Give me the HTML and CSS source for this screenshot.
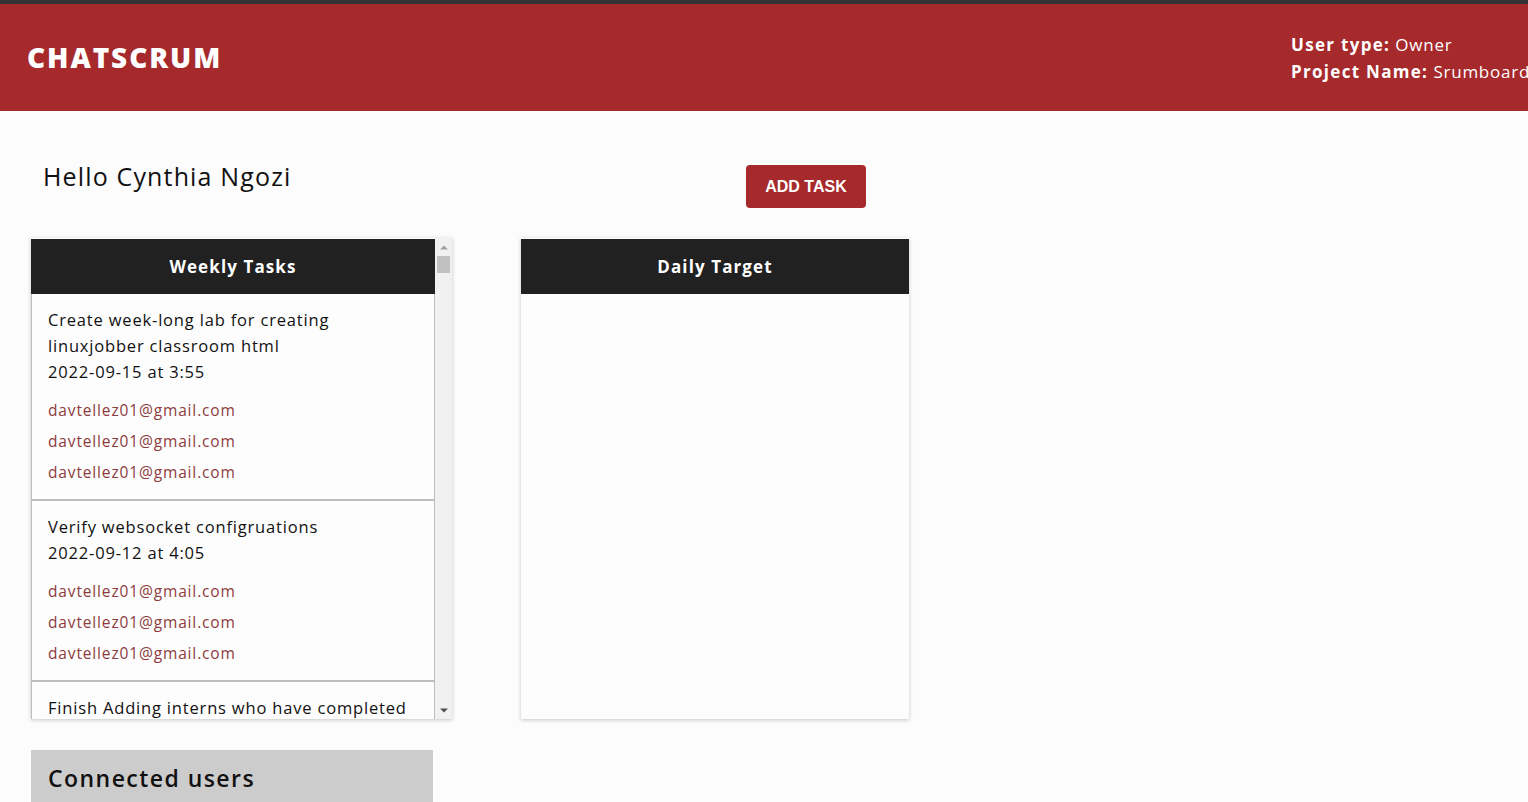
FILE: index.html
```html
<!DOCTYPE html>
<html lang="en">
<head>
<meta charset="utf-8">
<title>Chatscrum</title>
<link rel="stylesheet" href="styles.css">
</head>
<body>
<div class="topbar"></div>
<header class="header">
  <div class="brand">CHATSCRUM</div>
  <div class="info">
    <div><b>User type:</b> Owner</div>
    <div><b>Project Name:</b> Srumboard</div>
  </div>
</header>
<main class="main">
  <div class="greet-row">
    <h1 class="hello">Hello Cynthia Ngozi</h1>
    <button class="add-btn">ADD TASK</button>
  </div>
  <div class="boards">
    <section class="board weekly">
      <div class="board-scroll">
        <div class="board-head">Weekly Tasks</div>
        <div class="task">
          <div class="title">Create week-long lab for creating linuxjobber classroom html</div>
          <div class="title">2022-09-15 at 3:55</div>
          <div class="emails">
            <div class="email">davtellez01@gmail.com</div>
            <div class="email">davtellez01@gmail.com</div>
            <div class="email">davtellez01@gmail.com</div>
          </div>
        </div>
        <div class="task">
          <div class="title">Verify websocket configruations</div>
          <div class="title">2022-09-12 at 4:05</div>
          <div class="emails">
            <div class="email">davtellez01@gmail.com</div>
            <div class="email">davtellez01@gmail.com</div>
            <div class="email">davtellez01@gmail.com</div>
          </div>
        </div>
        <div class="task">
          <div class="title">Finish Adding interns who have completed</div>
        </div>
      </div>
      <div class="scrollbar" aria-hidden="true">
        <div class="sb-btn">
          <svg width="8" height="5" viewBox="0 0 8 5"><polygon points="0,4.5 8,4.5 4,0.5" fill="#a3a3a3"/></svg>
        </div>
        <div class="sb-track"><div class="sb-thumb"></div></div>
        <div class="sb-btn">
          <svg width="8" height="5" viewBox="0 0 8 5"><polygon points="0,0.5 8,0.5 4,4.5" fill="#505050"/></svg>
        </div>
      </div>
    </section>
    <section class="board daily">
      <div class="board-head">Daily Target</div>
    </section>
  </div>
  <section class="connected">
    <h2 class="connected-title">Connected users</h2>
  </section>
</main>
</body>
</html>
```
FILE: styles.css
```css
html, body {
  margin: 0;
  padding: 0;
  height: 100%;
  overflow: hidden;
}
body {
  background: #fcfcfc;
  font-family: "Open Sans", "Noto Sans", sans-serif;
  color: #111;
}
.topbar {
  height: 4px;
  background: #333333;
}
.header {
  height: 107px;
  background: #a6292b;
  display: flex;
  align-items: center;
  overflow: hidden;
  color: #fff;
}
.brand {
  flex: 0 0 1291px;
  box-sizing: border-box;
  padding-left: 27px;
  font-size: 28px;
  font-weight: 800;
  letter-spacing: 1.9px;
  margin-top: -2px;
}
.info {
  flex: 0 0 auto;
  white-space: nowrap;
  font-size: 17px;
  line-height: 27px;
  letter-spacing: 0.75px;
}
.info b {
  font-weight: 700;
  letter-spacing: 1.3px;
}
.main {
  padding: 0 31px;
}
.greet-row {
  display: flex;
  align-items: flex-start;
  height: 127px;
}
.hello {
  margin: 47px 0 0 12px;
  font-size: 25px;
  font-weight: 400;
  line-height: 36px;
  letter-spacing: 1.15px;
  width: 703px;
}
.add-btn {
  margin-top: 54px;
  width: 120px;
  height: 43px;
  background: #a6292b;
  color: #fff;
  border: none;
  border-radius: 4px;
  font-family: "Liberation Sans", Arial, sans-serif;
  font-size: 16px;
  font-weight: 700;
  padding: 0;
}
.boards {
  display: flex;
  align-items: flex-start;
}
.board {
  height: 481px;
  box-sizing: border-box;
  box-shadow: 0 1px 4px rgba(0, 0, 0, 0.22);
  background: #fdfdfd;
}
.weekly {
  width: 421px;
  display: flex;
}
.board-scroll {
  flex: 1 1 auto;
  min-width: 0;
  overflow: hidden;
}
.scrollbar {
  flex: 0 0 17px;
  display: flex;
  flex-direction: column;
  background: #f1f1f1;
  padding-top: 1px;
}
.sb-btn {
  height: 17px;
  display: flex;
  align-items: center;
  justify-content: center;
}
.sb-track {
  flex: 1 1 auto;
  padding: 0 2px;
}
.sb-thumb {
  height: 17px;
  background: #c1c1c1;
}
.daily {
  width: 388px;
  margin-left: 69px;
}
.board-head {
  height: 55px;
  margin-top: 1px;
  background: #212121;
  color: #fff;
  font-size: 17px;
  font-weight: 700;
  letter-spacing: 1.1px;
  display: flex;
  align-items: center;
  justify-content: center;
}
.task {
  border: 1px solid #bdbdbd;
  border-top: none;
  border-bottom: 2px solid #bdbdbd;
  padding: 13px 16px 11px;
  font-size: 16.5px;
  letter-spacing: 0.82px;
}
.title {
  line-height: 26px;
  color: #111;
}
.emails {
  margin-top: 10px;
}
.email {
  line-height: 31px;
  font-size: 15.5px;
  letter-spacing: 0.85px;
  color: #8e3b3e;
}
.connected {
  margin-top: 31px;
  width: 402px;
  background: #cccccc;
  padding: 12px 17px;
  box-sizing: border-box;
}
.connected-title {
  margin: 0;
  font-size: 23px;
  font-weight: 600;
  line-height: 32px;
  letter-spacing: 1.45px;
}
```
